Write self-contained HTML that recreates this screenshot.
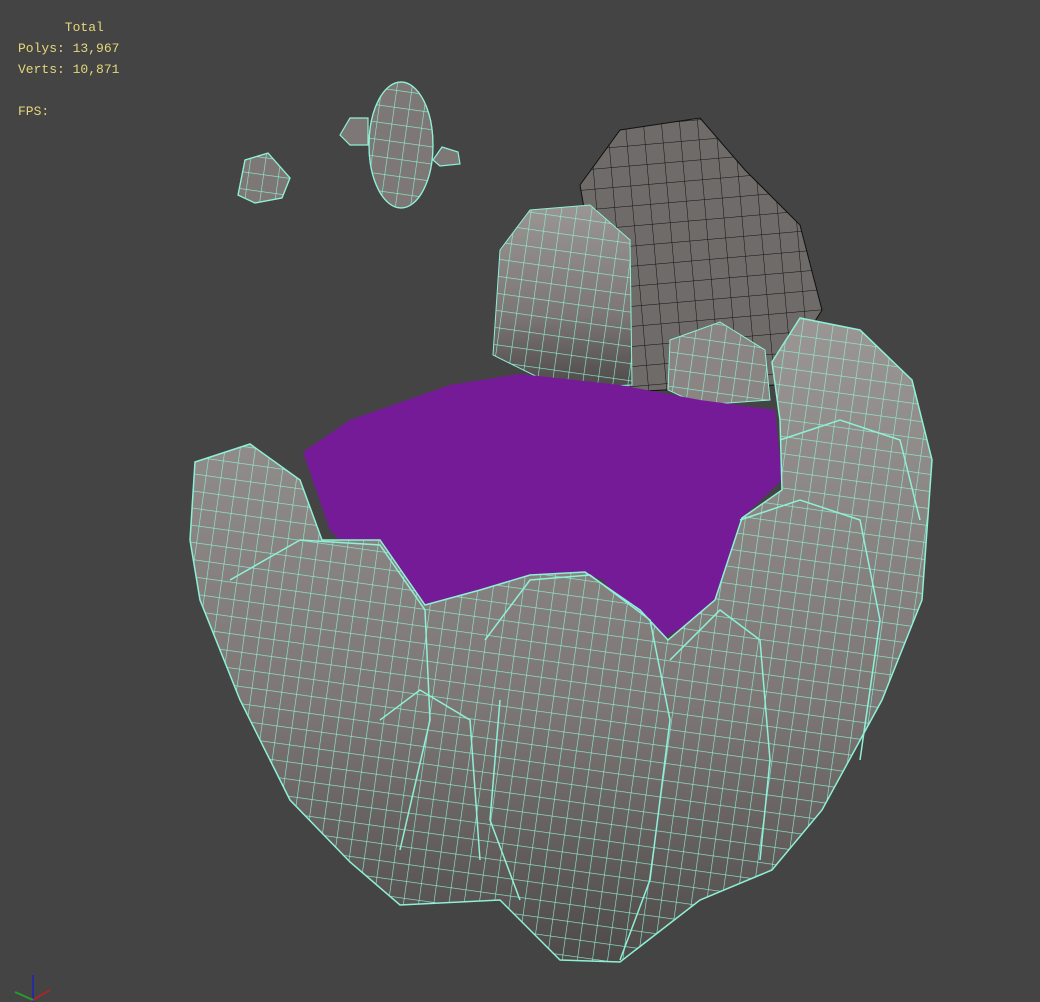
<!DOCTYPE html>
<html><head><meta charset="utf-8"><style>
html,body{margin:0;padding:0;background:#444444;width:1040px;height:1002px;overflow:hidden}
.t{position:absolute;font-family:"Liberation Mono",monospace;font-size:13px;color:#e6d77a;line-height:21px;white-space:pre}
</style></head><body>
<svg width="1040" height="1002" style="position:absolute;left:0;top:0">
<defs>
<pattern id="w" width="15" height="17" patternUnits="userSpaceOnUse" patternTransform="rotate(8)">
<path d="M0 0H15M0 0V17" stroke="#8ff0d6" stroke-width="1.2" fill="none"/>
</pattern>
<pattern id="k" width="18" height="20" patternUnits="userSpaceOnUse" patternTransform="rotate(-5)">
<path d="M0 0H18M0 0V20" stroke="#111" stroke-width="1" fill="none"/>
</pattern>
<linearGradient id="g" x1="0" y1="0" x2="0" y2="1"><stop offset="0" stop-color="#9a9693"/><stop offset="0.6" stop-color="#7c7775"/><stop offset="1" stop-color="#4e4a49"/></linearGradient>
</defs>
<!-- back dark rock -->
<path d="M580 185L620 130L700 118L745 170L800 225L822 310L775 385L620 392L600 300Z" fill="#6e6b69"/>
<path d="M580 185L620 130L700 118L745 170L800 225L822 310L775 385L620 392L600 300Z" fill="url(#k)" stroke="#111"/>
<!-- left back rock -->
<path d="M493 355L500 250L530 210L590 205L630 240L632 385L560 388Z" fill="url(#g)"/>
<path d="M493 355L500 250L530 210L590 205L630 240L632 385L560 388Z" fill="url(#w)" stroke="#8ff0d6"/>
<path d="M670 340L720 322L765 350L770 400L700 405L668 390Z" fill="#8a8583"/>
<path d="M670 340L720 322L765 350L770 400L700 405L668 390Z" fill="url(#w)" stroke="#8ff0d6"/>
<!-- water -->
<path d="M303 452L350 420L450 385L520 374L620 385L700 400L775 410L782 480L740 520L712 610L660 640L600 578L540 575L430 632L330 530Z" fill="#761b98"/>
<!-- front ring -->
<path d="M195 462L250 444L300 480L322 540L380 540L425 605L480 590L530 575L585 572L640 610L668 640L715 600L742 518L782 490L780 420L772 362L800 318L860 330L912 380L932 460L922 600L882 700L822 810L772 870L700 900L620 962L560 960L500 900L400 905L350 862L290 800L240 700L200 600L190 540Z" fill="url(#g)"/>
<path d="M195 462L250 444L300 480L322 540L380 540L425 605L480 590L530 575L585 572L640 610L668 640L715 600L742 518L782 490L780 420L772 362L800 318L860 330L912 380L932 460L922 600L882 700L822 810L772 870L700 900L620 962L560 960L500 900L400 905L350 862L290 800L240 700L200 600L190 540Z" fill="url(#w)" stroke="#8ff0d6" stroke-width="1.5"/>
<g fill="none" stroke="#8ff0d6" stroke-width="1.5">
<path d="M230 580L300 540L380 545L425 610L430 720L400 850"/>
<path d="M485 640L530 580L590 575L650 620L670 720L650 880L620 960"/>
<path d="M500 700L490 820L520 900"/>
<path d="M670 660L720 610L760 640L770 760L760 860"/>
<path d="M740 520L800 500L860 520L880 620L860 760"/>
<path d="M780 440L840 420L900 440L920 520"/>
<path d="M380 720L420 690L470 720L480 860"/>
</g>
<!-- floating rocks -->
<g stroke="#8ff0d6" stroke-width="1.2">
<ellipse cx="401" cy="145" rx="32" ry="63" fill="#7d7876"/>
<ellipse cx="401" cy="145" rx="32" ry="63" fill="url(#w)"/>
<path d="M238 195L245 160L268 153L290 178L282 198L255 203Z" fill="#7d7876"/>
<path d="M238 195L245 160L268 153L290 178L282 198L255 203Z" fill="url(#w)"/>
<path d="M340 135L350 118L368 118L368 145L350 145Z" fill="#7d7876"/>
<path d="M433 160L442 147L458 152L460 164L440 166Z" fill="#7d7876"/>
</g>
<!-- axis -->
<line x1="33" y1="975" x2="33" y2="1002" stroke="#2a2aa0" stroke-width="2"/>
<line x1="33" y1="1000" x2="50" y2="990" stroke="#a02a2a" stroke-width="2"/>
<line x1="33" y1="1000" x2="15" y2="992" stroke="#2a9a2a" stroke-width="2"/>
</svg>
<div class="t" style="left:18px;top:17px">      Total
Polys: 13,967
Verts: 10,871

FPS:</div>
</body></html>
